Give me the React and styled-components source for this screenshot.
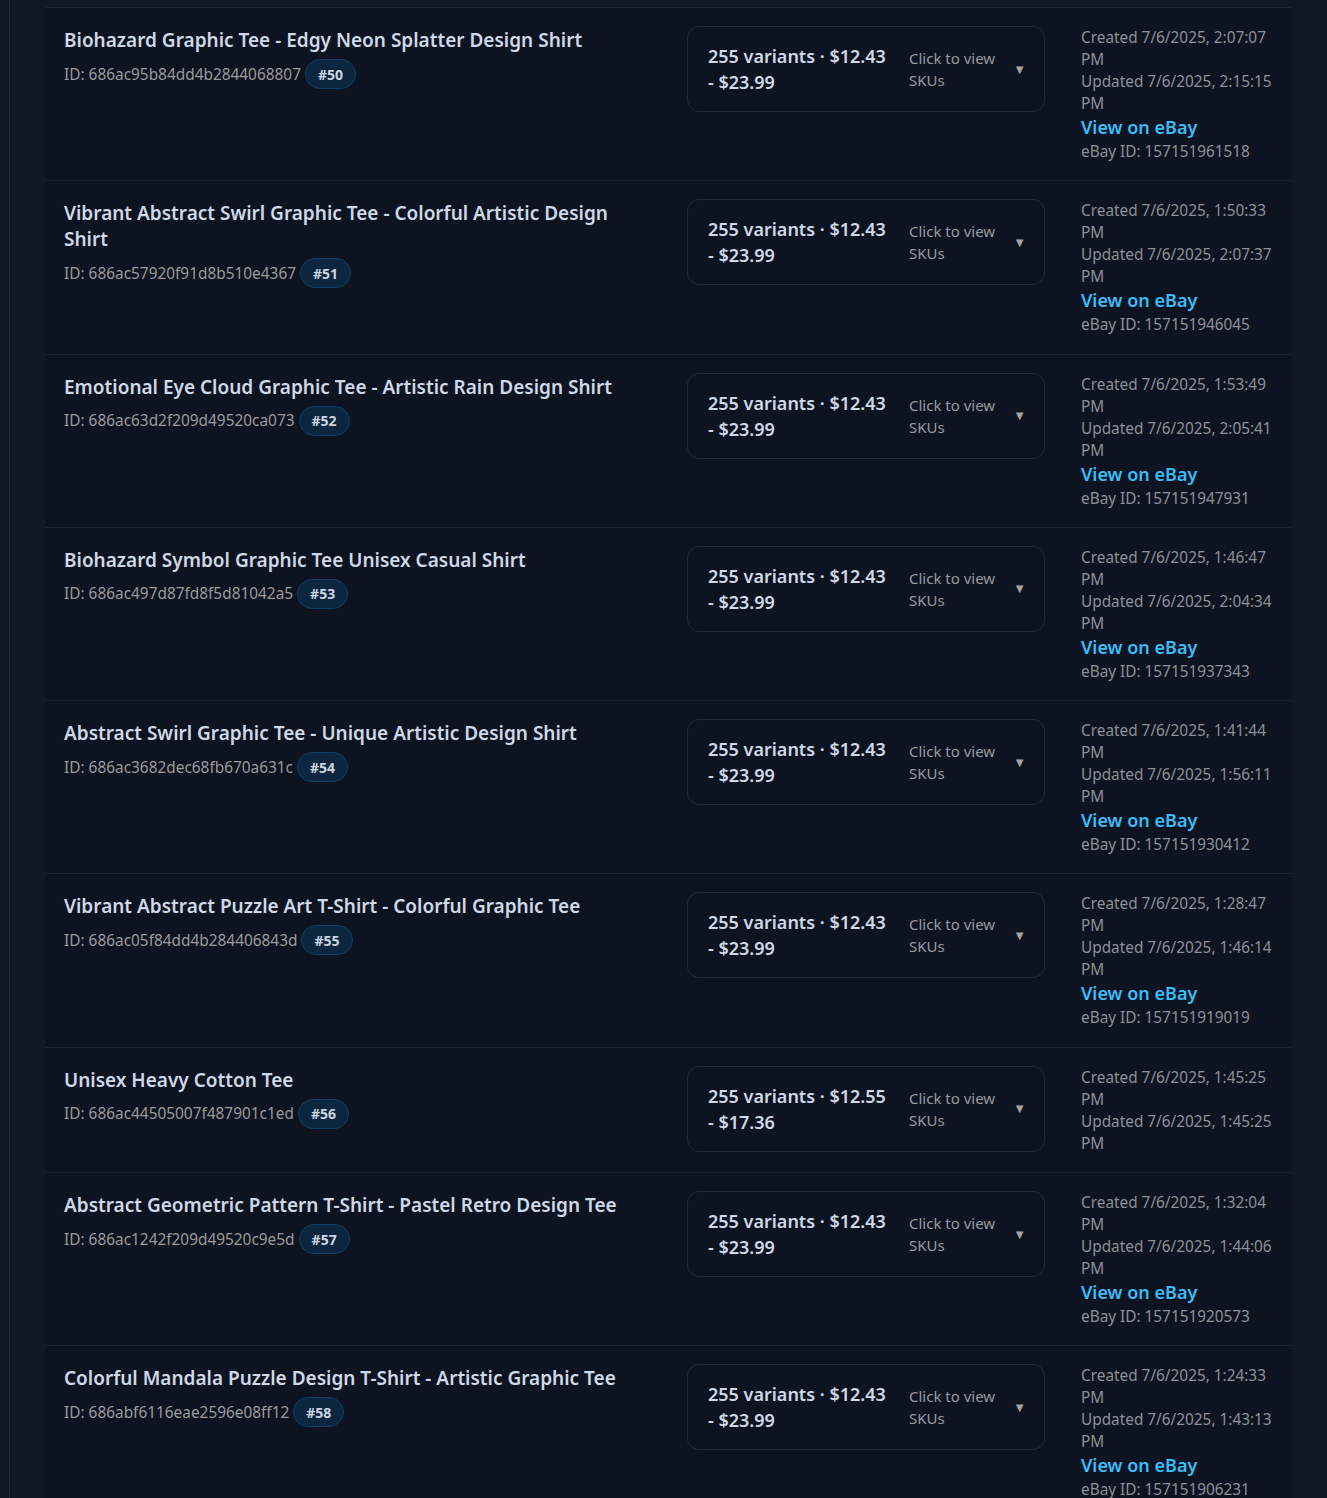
import React from 'react'
import styled, { createGlobalStyle } from 'styled-components'

const GlobalStyle = createGlobalStyle`
    html, body {
        margin: 0;
        padding: 0;
        background: #111726;
        font-family: "Noto Sans", "Open Sans", sans-serif;
        height: 1498px;
        overflow: hidden;
    }
    * { box-sizing: border-box; }
`

const products = [
    { title: 'Biohazard Graphic Tee - Edgy Neon Splatter Design Shirt', id: '686ac95b84dd4b2844068807', num: 50, price: '$12.43 - $23.99', created: '2:07:07', updated: '2:15:15', ebay: '157151961518' },
    { title: 'Vibrant Abstract Swirl Graphic Tee - Colorful Artistic Design Shirt', id: '686ac57920f91d8b510e4367', num: 51, price: '$12.43 - $23.99', created: '1:50:33', updated: '2:07:37', ebay: '157151946045' },
    { title: 'Emotional Eye Cloud Graphic Tee - Artistic Rain Design Shirt', id: '686ac63d2f209d49520ca073', num: 52, price: '$12.43 - $23.99', created: '1:53:49', updated: '2:05:41', ebay: '157151947931' },
    { title: 'Biohazard Symbol Graphic Tee Unisex Casual Shirt', id: '686ac497d87fd8f5d81042a5', num: 53, price: '$12.43 - $23.99', created: '1:46:47', updated: '2:04:34', ebay: '157151937343' },
    { title: 'Abstract Swirl Graphic Tee - Unique Artistic Design Shirt', id: '686ac3682dec68fb670a631c', num: 54, price: '$12.43 - $23.99', created: '1:41:44', updated: '1:56:11', ebay: '157151930412' },
    { title: 'Vibrant Abstract Puzzle Art T-Shirt - Colorful Graphic Tee', id: '686ac05f84dd4b284406843d', num: 55, price: '$12.43 - $23.99', created: '1:28:47', updated: '1:46:14', ebay: '157151919019' },
    { title: 'Unisex Heavy Cotton Tee', id: '686ac44505007f487901c1ed', num: 56, price: '$12.55 - $17.36', created: '1:45:25', updated: '1:45:25', ebay: null },
    { title: 'Abstract Geometric Pattern T-Shirt - Pastel Retro Design Tee', id: '686ac1242f209d49520c9e5d', num: 57, price: '$12.43 - $23.99', created: '1:32:04', updated: '1:44:06', ebay: '157151920573' },
    { title: 'Colorful Mandala Puzzle Design T-Shirt - Artistic Graphic Tee', id: '686abf6116eae2596e08ff12', num: 58, price: '$12.43 - $23.99', created: '1:24:33', updated: '1:43:13', ebay: '157151906231' },
]

const Page = styled.div`
    display: flex;
    min-height: 1498px;
`

const Sidebar = styled.aside`
    width: 10px;
    flex: 0 0 10px;
    border-right: 1px solid #1f2636;
`

const Main = styled.main`
    flex: 1;
    padding: 7px 36px 0 36px;
`

const List = styled.div`
    background: #0e1321;
`

const Row = styled.div`
    display: grid;
    grid-template-columns: 623px 394px 228px;
    border-top: 1px solid #1d2434;
`

const Cell = styled.div`
    padding: 18px 18px 18.3px;
`

const Title = styled.h3`
    margin: 0;
    padding-top: 1px;
    font-size: 19px;
    line-height: 26px;
    font-weight: 600;
    color: #cfd8e6;
`

const Meta = styled.div`
    display: flex;
    align-items: center;
    gap: 4px;
    margin-top: 6px;
    font-size: 15.4px;
    color: #9c9a9c;
`

const Badge = styled.span`
    display: inline-flex;
    align-items: center;
    height: 30px;
    padding: 0 12px;
    border-radius: 999px;
    background: #0c2640;
    border: 1px solid #0d4164;
    color: #cbd5e1;
    font-size: 14px;
    font-weight: 700;
`

const VariantBox = styled.button`
    display: flex;
    align-items: center;
    width: 100%;
    padding: 16px 18px 16px 20px;
    background: transparent;
    border: 1px solid #222a3a;
    border-radius: 12px;
    font-family: inherit;
    text-align: left;
    cursor: pointer;
`

const VariantText = styled.span`
    flex: 0 0 180px;
    font-size: 18px;
    line-height: 26px;
    font-weight: 600;
    color: #cfd8e6;
`

const Hint = styled.span`
    flex: 0 0 96px;
    margin-left: 21px;
    font-size: 15px;
    line-height: 22px;
    color: #979aa0;
`

const Caret = styled.span`
    margin-left: auto;
    font-size: 13px;
    line-height: 1;
    color: #a8a29e;
`

const Dates = styled.div`
    font-size: 15.35px;
    line-height: 22px;
    color: #8e9097;
`

const EbayLink = styled.a`
    display: block;
    font-size: 18px;
    line-height: 26px;
    font-weight: 600;
    color: #38bdf8;
    text-decoration: none;
`

function ProductRow({ p }) {
    return (
        <Row>
            <Cell>
                <Title>{p.title}</Title>
                <Meta>
                    <span>ID: {p.id}</span>
                    <Badge>#{p.num}</Badge>
                </Meta>
            </Cell>
            <Cell>
                <VariantBox>
                    <VariantText>255 variants · {p.price}</VariantText>
                    <Hint>Click to view SKUs</Hint>
                    <Caret>▼</Caret>
                </VariantBox>
            </Cell>
            <Cell>
                <Dates>
                    <div>Created 7/6/2025, {p.created} PM</div>
                    <div>Updated 7/6/2025, {p.updated} PM</div>
                    {p.ebay && (
                        <>
                            <EbayLink href="#">View on eBay</EbayLink>
                            <div>eBay ID: {p.ebay}</div>
                        </>
                    )}
                </Dates>
            </Cell>
        </Row>
    )
}

export default function App() {
    return (
        <>
            <GlobalStyle />
            <Page>
                <Sidebar />
                <Main>
                    <List>
                        {products.map(p => <ProductRow key={p.id} p={p} />)}
                    </List>
                </Main>
            </Page>
        </>
    )
}
